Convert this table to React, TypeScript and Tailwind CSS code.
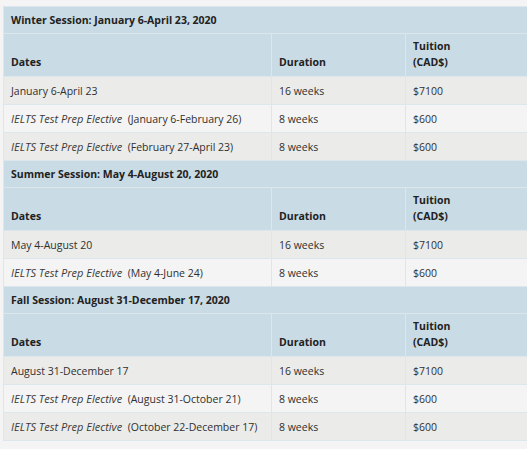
import React from "react"

type Row = {
  elective?: string
  dates: string
  duration: string
  tuition: string
}

type Session = {
  title: string
  rows: Row[]
}

const sessions: Session[] = [
  {
    title: "Winter Session: January 6-April 23, 2020",
    rows: [
      { dates: "January 6-April 23", duration: "16 weeks", tuition: "$7100" },
      { elective: "IELTS Test Prep Elective", dates: "(January 6-February 26)", duration: "8 weeks", tuition: "$600" },
      { elective: "IELTS Test Prep Elective", dates: "(February 27-April 23)", duration: "8 weeks", tuition: "$600" },
    ],
  },
  {
    title: "Summer Session: May 4-August 20, 2020",
    rows: [
      { dates: "May 4-August 20", duration: "16 weeks", tuition: "$7100" },
      { elective: "IELTS Test Prep Elective", dates: "(May 4-June 24)", duration: "8 weeks", tuition: "$600" },
    ],
  },
  {
    title: "Fall Session: August 31-December 17, 2020",
    rows: [
      { dates: "August 31-December 17", duration: "16 weeks", tuition: "$7100" },
      { elective: "IELTS Test Prep Elective", dates: "(August 31-October 21)", duration: "8 weeks", tuition: "$600" },
      { elective: "IELTS Test Prep Elective", dates: "(October 22-December 17)", duration: "8 weeks", tuition: "$600" },
    ],
  },
]

const cell = "border border-[#dce6ed] px-[7px] py-0 text-left"

export default function App() {
  return (
    <div
      className="min-h-[449px] w-full overflow-hidden bg-[#f4f4f4] pt-[6px] pl-[3px] text-[10.5px] leading-[16px] text-[#303030]"
      style={{ fontFamily: '"Open Sans", "Liberation Sans", sans-serif' }}
    >
      <table className="w-[540px] table-fixed border-collapse">
        <colgroup>
          <col className="w-[268px]" />
          <col className="w-[134px]" />
          <col />
        </colgroup>
        {sessions.map((s) => (
          <tbody key={s.title}>
            <tr className="bg-[#c9dbe5]">
              <th colSpan={3} className={`${cell} h-[27px] align-middle font-bold text-[#222]`}>
                {s.title}
              </th>
            </tr>
            <tr className="bg-[#c9dbe5]">
              <th className={`${cell} h-[43px] pb-[6px] align-bottom font-bold text-[#222]`}>Dates</th>
              <th className={`${cell} h-[43px] pb-[6px] align-bottom font-bold text-[#222]`}>Duration</th>
              <th className={`${cell} h-[43px] pb-[6px] align-bottom font-bold text-[#222]`}>
                Tuition
                <br />
                (CAD$)
              </th>
            </tr>
            {s.rows.map((r, i) => (
              <tr key={i} className={i % 2 === 0 ? "bg-[#ebebe9]" : "bg-[#f4f4f4]"}>
                <td className={`${cell} h-[28px]`}>
                  {r.elective && (
                    <>
                      <em className="text-[11px] italic text-[#3a3a3a]">{r.elective}</em>
                      {"\u00a0 "}
                    </>
                  )}
                  {r.dates}
                </td>
                <td className={`${cell} h-[28px]`}>{r.duration}</td>
                <td className={`${cell} h-[28px]`}>{r.tuition}</td>
              </tr>
            ))}
          </tbody>
        ))}
      </table>
    </div>
  )
}
